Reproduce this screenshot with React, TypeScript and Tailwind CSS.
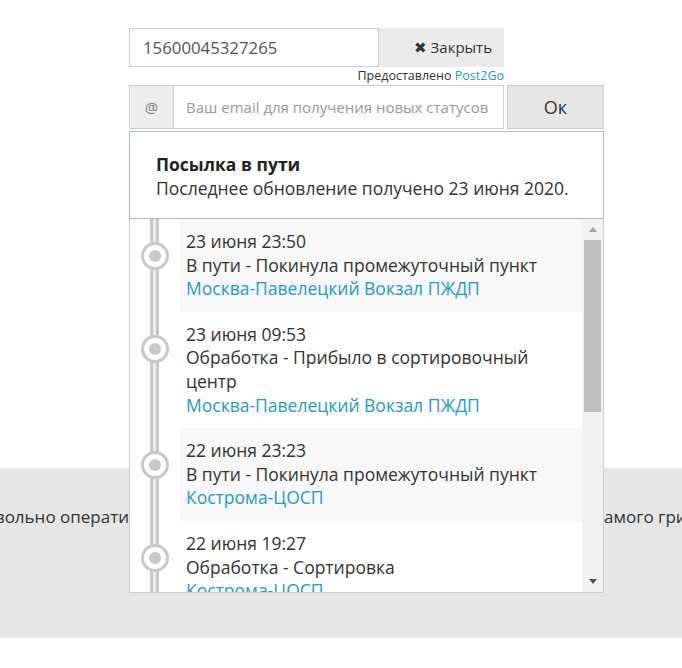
import React from "react";

type Ev = { date: string; status: string; place: string };

const events: Ev[] = [
  { date: "23 июня 23:50", status: "В пути - Покинула промежуточный пункт", place: "Москва-Павелецкий Вокзал ПЖДП" },
  { date: "23 июня 09:53", status: "Обработка - Прибыло в сортировочный центр", place: "Москва-Павелецкий Вокзал ПЖДП" },
  { date: "22 июня 23:23", status: "В пути - Покинула промежуточный пункт", place: "Кострома-ЦОСП" },
  { date: "22 июня 19:27", status: "Обработка - Сортировка", place: "Кострома-ЦОСП" },
  { date: "22 июня 17:05", status: "Обработка - Прибыло в место вручения", place: "Кострома-ЦОСП" },
];

function Item({ ev, shaded }: { ev: Ev; shaded: boolean }) {
  return (
    <div className="flex shrink-0">
      <div className="relative w-[50px] shrink-0">
        <div className="absolute left-[20px] top-0 bottom-0 w-[9px] border-x-[3px] border-[#c9c9c9] bg-[#ececec]" />
        <div className="absolute left-[11px] top-[23px] w-[28px] h-[28px] rounded-full border-[3px] border-[#c9c9c9] bg-white flex items-center justify-center">
          <div className="w-[12px] h-[12px] rounded-full bg-[#c9c9c9]" />
        </div>
      </div>
      <div className={`flex-1 pl-[6px] pr-[4px] pt-[11px] pb-[11px] text-[17.5px] leading-[23.6px] text-[#333] ${shaded ? "bg-[#f8f8f8]" : "bg-white"}`}>
        <div>{ev.date}</div>
        <div>{ev.status}</div>
        <div className="text-[#1f9bc8]">{ev.place}</div>
      </div>
    </div>
  );
}

export default function App() {
  return (
    <div className="relative min-h-[668px] bg-white font-['Open_Sans',sans-serif] text-[#333] overflow-hidden">
      <div className="ml-[129px] pt-[28px] w-[475px] relative z-10">
        <div className="flex h-[39px]">
          <div className="w-[250px] border border-[#cccccc] flex items-center pl-[13px] text-[16.8px] text-[#555]">
            15600045327265
          </div>
          <button className="w-[125px] bg-[#ebebeb] flex items-center justify-end gap-[4px] text-[15px] text-[#333] pr-[12px]">
            <span className="text-[15px] leading-none">✖</span>
            <span>Закрыть</span>
          </button>
        </div>
        <div className="w-[375px] h-[18px] text-right text-[12.5px] leading-[18px] text-[#333]">
          Предоставлено <span className="text-[#1f9bc8]">Post2Go</span>
        </div>
        <div className="flex h-[44px] gap-[3px]">
          <div className="flex">
            <div className="w-[45px] bg-[#eeeeee] border border-[#cccccc] flex items-center justify-center text-[15px] text-[#777]">
              @
            </div>
            <div className="w-[330px] border-y border-r border-[#cccccc] flex items-center pl-[12px] text-[15px] text-[#999] whitespace-nowrap overflow-hidden">
              Ваш email для получения новых статусов
            </div>
          </div>
          <button className="flex-1 bg-[#e6e6e6] border border-[#cccccc] flex items-center justify-center text-[18px] text-[#333]">
            Ок
          </button>
        </div>

        <div className="absolute left-0 top-full mt-[2px] w-[475px] bg-white">
          <div className="border border-[#a9baba] h-[88px] pl-[26px] pt-[20px] text-[17.5px] leading-[24px]">
            <div className="font-bold text-[#222]">Посылка в пути</div>
            <div className="text-[#333]">Последнее обновление получено 23 июня 2020.</div>
          </div>
          <div className="flex h-[374px] border-x border-b border-[#cccccc]">
            <div className="flex-1 flex flex-col overflow-hidden">
              {events.map((ev, i) => (
                <Item key={i} ev={ev} shaded={i % 2 === 0} />
              ))}
            </div>
            <div className="w-[21px] bg-[#f1f1f1] flex flex-col">
              <div className="h-[21px] flex items-center justify-center">
                <div className="w-0 h-0 border-x-[4px] border-x-transparent border-b-[5px] border-b-[#a3a3a3]" />
              </div>
              <div className="mx-[2px] h-[172px] bg-[#c1c1c1]" />
              <div className="flex-1" />
              <div className="h-[21px] flex items-center justify-center">
                <div className="w-0 h-0 border-x-[4px] border-x-transparent border-t-[5px] border-t-[#505050]" />
              </div>
            </div>
          </div>
        </div>
      </div>

      <div className="mt-[339px] h-[170px] bg-[#e6e6e6] pt-[37px]">
        <div className="grid grid-cols-[129px_475px_1fr] text-[17px] leading-[24px] text-[#333] whitespace-nowrap">
          <div className="flex justify-end overflow-hidden">
            <span>Наш сервис довольно операти</span>
          </div>
          <div className="overflow-hidden">
            <span>вно отслеживает все почтовые отправления прямо с с</span>
          </div>
          <div className="overflow-hidden">
            <span>амого гринвича и до самого дома</span>
          </div>
        </div>
      </div>
    </div>
  );
}
